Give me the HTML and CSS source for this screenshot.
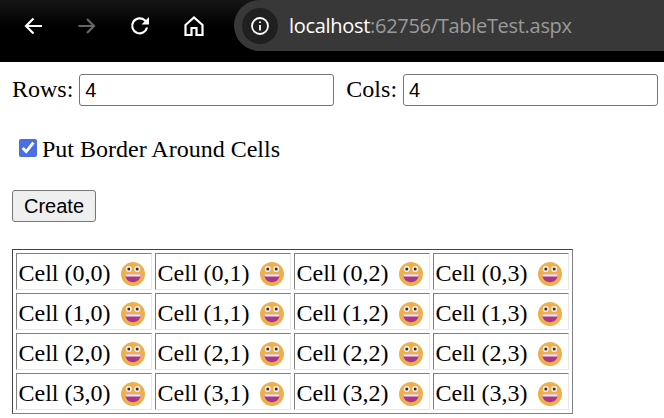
FILE: index.html
```html
<!DOCTYPE html>
<html lang="en">
<head>
<meta charset="utf-8">
<title>TableTest</title>
<link rel="stylesheet" href="styles.css">
</head>
<body>
<header class="toolbar">
  <svg class="nav nav-back" viewBox="0 0 20 20"><path d="M18 10H2M9.500 2.500 2 10l7.500 7.500"/></svg>
  <svg class="nav nav-fwd" viewBox="0 0 20 20"><path d="M1.500 10H17M10 3l7 7-7 7"/></svg>
  <svg class="nav nav-reload" viewBox="0 0 20 20"><path d="M17 11.500A7.500 7.500 0 1 1 14.800 4.300L17 6.500"/><path class="solid" d="M19 1v7.500h-7.500z"/></svg>
  <svg class="nav nav-home" viewBox="0 0 20 20"><path d="M1.500 9 10 1.500 18.500 9V19h-6V12h-5v7h-6z"/></svg>
  <div class="omnibox">
    <span class="info"><svg viewBox="0 0 20 20"><circle cx="10" cy="10" r="8"/><path d="M10 9v5.500M10 5.500v1.600"/></svg></span>
    <span class="url">localhost<span class="url-rest">:62756/TableTest.aspx</span></span>
  </div>
</header>
<main class="page">
  <div class="fields">
    <label class="field"><span class="field-label">Rows:</span> <input class="text-input" type="text" value="4"></label>
    <label class="field"><span class="field-label">Cols:</span> <input class="text-input" type="text" value="4"></label>
  </div>
  <label class="check"><input class="checkbox" type="checkbox" checked> <span class="check-label">Put Border Around Cells</span></label>
  <button class="create" type="button">Create</button>
  <table class="grid">
    <tbody id="grid"></tbody>
  </table>
</main>
<script src="app.js"></script>
</body>
</html>
```
FILE: app.js
```js
var face = '<svg class="emoji" viewBox="0 0 24 24"><circle cx="12" cy="12" r="12" fill="#efb04b"/><path d="M4.300 12.300h15.400c0 4.700-3 7.900-7.700 7.900s-7.700-3.200-7.700-7.900z" fill="#a8378b"/><path d="M4.300 12.300h15.400l-.3 2.200H4.600z" fill="#f3ecec"/><circle cx="7.800" cy="7" r="3" fill="#f5f2f2"/><circle cx="16.200" cy="7" r="3" fill="#f5f2f2"/><circle cx="7.800" cy="7" r="1.500" fill="#3a2a30"/><circle cx="16.200" cy="7" r="1.500" fill="#3a2a30"/></svg>';
var html = '';
for (var r = 0; r < 4; r++) {
  html += '<tr>';
  for (var c = 0; c < 4; c++) {
    html += '<td class="cell"><span class="cell-inner">Cell (' + r + ',' + c + ')' + face + '</span></td>';
  }
  html += '</tr>';
}
document.getElementById('grid').innerHTML = html;
```
FILE: styles.css
```css
* { box-sizing: border-box; }
html, body { margin: 0; padding: 0; }
body {
  width: 664px;
  height: 418px;
  overflow: hidden;
  background: #fff;
  color: #000;
  font: 24px/27px "Liberation Serif", serif;
}
.toolbar {
  height: 62px;
  display: flex;
  align-items: flex-start;
  background: linear-gradient(#151515, #000 45%);
  border-bottom: 2px solid;
  border-image: linear-gradient(#555 50%, #000 50%) 1;
  padding-left: 24px;
}
.nav {
  width: 20px;
  height: 20px;
  margin-top: 16px;
  fill: none;
  stroke: #fff;
  stroke-width: 2.200;
  flex: none;
}
.nav .solid { fill: #fff; stroke: none; }
.nav-fwd { margin-left: 33px; stroke: #666; }
.nav-reload { margin-left: 33px; }
.nav-home { margin-left: 34px; }
.omnibox {
  margin-left: 30px;
  flex: 1;
  height: 51px;
  display: flex;
  align-items: center;
  background: #383838;
  border-radius: 26px 0 0 26px;
  padding-left: 8px;
}
.info {
  width: 36px;
  height: 36px;
  border-radius: 50%;
  background: #202020;
  display: flex;
  align-items: center;
  justify-content: center;
}
.info svg { width: 20px; height: 20px; fill: none; stroke: #fff; stroke-width: 1.800; }
.url {
  margin-left: 11px;
  font: 20px/26px "Open Sans", "Liberation Sans", sans-serif;
  letter-spacing: -0.3px;
  color: #fff;
}
.url-rest { color: #9a9a9a; }
.page { padding: 12px 0 0 12px; }
.fields { display: flex; gap: 12px; height: 32px; align-items: center; }
.field { display: flex; align-items: center; gap: 6px; white-space: nowrap; }
.field-label { margin-bottom: 2px; }
.text-input {
  width: 255px;
  height: 32px;
  padding: 1px 5px;
  border: 1px solid #767676;
  border-radius: 3px;
  font: 20px "Liberation Sans", sans-serif;
  color: #000;
  background: #fff;
}
.check { display: flex; align-items: center; margin-top: 27px; height: 32px; }
.check-label { margin-left: 5px; }
.checkbox {
  width: 18px;
  height: 18px;
  margin: 0 0 3px 7px;
  accent-color: #4a6fe3;
}
.create {
  display: block;
  margin-top: 25px;
  width: 84px;
  height: 32px;
  padding: 0;
  border: 1px solid #767676;
  border-radius: 3px;
  background: #efefef;
  color: #000;
  font: 20px "Liberation Sans", sans-serif;
}
.grid {
  margin-top: 27px;
  border-collapse: separate;
  border-spacing: 3px;
  border: 1px solid;
  border-color: #444 #808080 #808080 #444;
}
.cell {
  width: 136px;
  height: 37px;
  padding: 4px 2px 0 1.500px;
  border: 1px solid;
  border-color: #808080 #e8e8e8 #e8e8e8 #808080;
}
.cell-inner { display: flex; align-items: center; white-space: nowrap; }
.emoji { width: 24px; height: 24px; margin-left: 10.500px; flex: none; }
```
